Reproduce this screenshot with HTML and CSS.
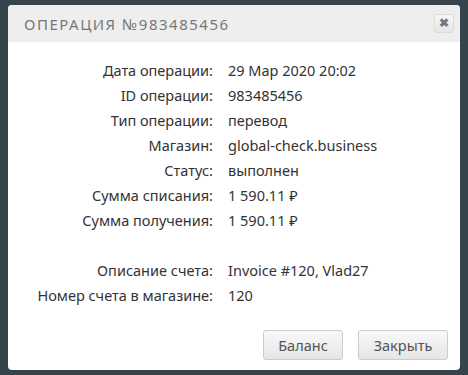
FILE: index.html
```html
<!DOCTYPE html>
<html lang="ru">
<head>
    <meta charset="utf-8">
    <title>Операция</title>
    <link rel="stylesheet" href="styles.css">
</head>
<body>
    <div class="modal">
        <div class="modal-header">
            <h3>Операция №983485456</h3>
            <button class="close">&#10006;</button>
        </div>
        <div class="modal-body">
            <div class="info">
                <span class="label">Дата операции:</span><span class="value">29 Мар 2020 20:02</span>
                <span class="label">ID операции:</span><span class="value">983485456</span>
                <span class="label">Тип операции:</span><span class="value">перевод</span>
                <span class="label">Магазин:</span><span class="value">global-check.business</span>
                <span class="label">Статус:</span><span class="value">выполнен</span>
                <span class="label">Сумма списания:</span><span class="value">1 590.11 &#8381;</span>
                <span class="label">Сумма получения:</span><span class="value">1 590.11 &#8381;</span>
                <span class="label">&nbsp;</span><span class="value">&nbsp;</span>
                <span class="label">Описание счета:</span><span class="value">Invoice #120, Vlad27</span>
                <span class="label">Номер счета в магазине:</span><span class="value">120</span>
            </div>
        </div>
        <div class="modal-footer">
            <button class="btn btn-balance">Баланс</button>
            <button class="btn btn-close">Закрыть</button>
        </div>
    </div>
</body>
</html>
```

FILE: styles.css
```css
* {
    box-sizing: border-box;
    margin: 0;
    padding: 0;
}

body {
    background: #36454b;
    font-family: "Noto Sans", Arial, sans-serif;
    color: #333;
    padding: 5px 8px 0;
}

.modal {
    background: #fff;
    border-radius: 4px;
    overflow: hidden;
}

.modal-header {
    background: #eeeeee;
    height: 37px;
    display: flex;
    align-items: center;
    justify-content: space-between;
    padding: 0 6px 0 16px;
}

.modal-header h3 {
    font-size: 15px;
    font-weight: normal;
    text-transform: uppercase;
    letter-spacing: 1.5px;
    color: #777;
}

.close {
    width: 20px;
    height: 19px;
    border: 1px solid #ddd;
    border-radius: 3px;
    background: linear-gradient(#f6f6f6, #e6e6e6);
    color: #777;
    font-size: 12px;
    font-weight: bold;
    line-height: 17px;
    cursor: pointer;
}

.modal-body {
    padding: 15px 0 0;
}

.info {
    display: grid;
    grid-template-columns: 205px 1fr;
    column-gap: 15px;
    grid-auto-rows: 25px;
    align-items: center;
    font-size: 14.5px;
}

.label {
    text-align: right;
}

.modal-footer {
    display: flex;
    justify-content: flex-end;
    gap: 15px;
    padding: 23px 12px 10px;
}

.btn {
    height: 30px;
    border: 1px solid #ccc;
    border-radius: 3px;
    background: linear-gradient(#f8f8f8, #e6e6e6);
    color: #555;
    font-family: "Noto Sans", Arial, sans-serif;
    font-size: 14.5px;
    cursor: pointer;
}

.btn-balance {
    width: 80px;
}

.btn-close {
    width: 90px;
}
```
